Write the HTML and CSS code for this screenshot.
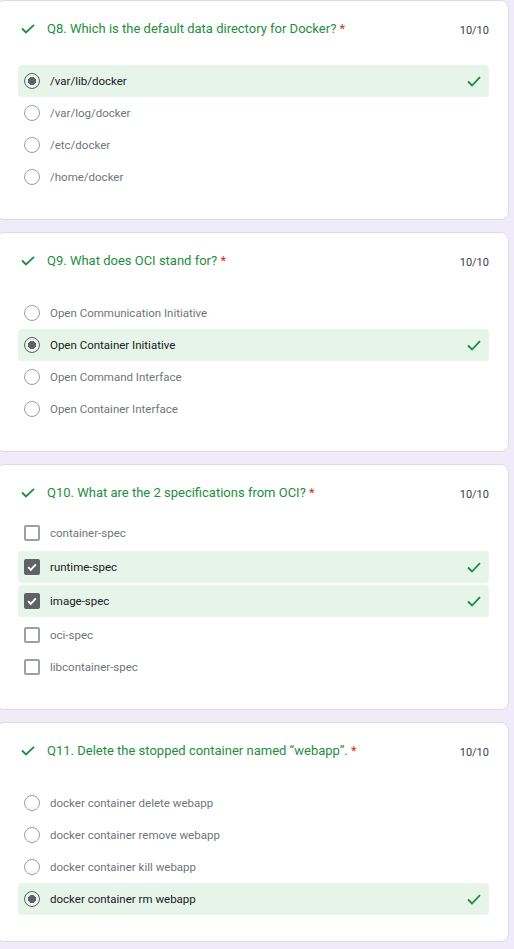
FILE: index.html
```html
<!DOCTYPE html>
<html>
<head>
<meta charset="utf-8">
<link rel="stylesheet" href="styles.css">
</head>
<body>
<div class="page">

  <div class="card">
    <div class="head">
      <svg class="qcheck" viewBox="0 0 14 10"><polyline points="1,4.5 5,8.5 13,0.8"/></svg>
      <div class="title">Q8. Which is the default data directory for Docker? <span class="req">*</span></div>
      <div class="score">10/10</div>
    </div>
    <div class="list">
      <div class="row correct"><span class="radio on"></span><span class="label sel">/var/lib/docker</span><svg class="rcheck" viewBox="0 0 14 11"><polyline points="1,5.5 5,9.5 13,1.2"/></svg></div>
      <div class="row"><span class="radio"></span><span class="label">/var/log/docker</span></div>
      <div class="row"><span class="radio"></span><span class="label">/etc/docker</span></div>
      <div class="row"><span class="radio"></span><span class="label">/home/docker</span></div>
    </div>
  </div>

  <div class="card">
    <div class="head">
      <svg class="qcheck" viewBox="0 0 14 10"><polyline points="1,4.5 5,8.5 13,0.8"/></svg>
      <div class="title">Q9. What does OCI stand for? <span class="req">*</span></div>
      <div class="score">10/10</div>
    </div>
    <div class="list">
      <div class="row"><span class="radio"></span><span class="label">Open Communication Initiative</span></div>
      <div class="row correct"><span class="radio on"></span><span class="label sel">Open Container Initiative</span><svg class="rcheck" viewBox="0 0 14 11"><polyline points="1,5.5 5,9.5 13,1.2"/></svg></div>
      <div class="row"><span class="radio"></span><span class="label">Open Command Interface</span></div>
      <div class="row"><span class="radio"></span><span class="label">Open Container Interface</span></div>
    </div>
  </div>

  <div class="card">
    <div class="head">
      <svg class="qcheck" viewBox="0 0 14 10"><polyline points="1,4.5 5,8.5 13,0.8"/></svg>
      <div class="title">Q10. What are the 2 specifications from OCI? <span class="req">*</span></div>
      <div class="score">10/10</div>
    </div>
    <div class="list checks">
      <div class="row"><span class="box"></span><span class="label">container-spec</span></div>
      <div class="row correct"><span class="box on"><svg viewBox="0 0 12 12"><polyline points="2.2,6.2 4.8,8.8 9.8,3.4"/></svg></span><span class="label sel">runtime-spec</span><svg class="rcheck" viewBox="0 0 14 11"><polyline points="1,5.5 5,9.5 13,1.2"/></svg></div>
      <div class="row correct"><span class="box on"><svg viewBox="0 0 12 12"><polyline points="2.2,6.2 4.8,8.8 9.8,3.4"/></svg></span><span class="label sel">image-spec</span><svg class="rcheck" viewBox="0 0 14 11"><polyline points="1,5.5 5,9.5 13,1.2"/></svg></div>
      <div class="row"><span class="box"></span><span class="label">oci-spec</span></div>
      <div class="row"><span class="box"></span><span class="label">libcontainer-spec</span></div>
    </div>
  </div>

  <div class="card">
    <div class="head">
      <svg class="qcheck" viewBox="0 0 14 10"><polyline points="1,4.5 5,8.5 13,0.8"/></svg>
      <div class="title">Q11. Delete the stopped container named “webapp”. <span class="req">*</span></div>
      <div class="score">10/10</div>
    </div>
    <div class="list">
      <div class="row"><span class="radio"></span><span class="label">docker container delete webapp</span></div>
      <div class="row"><span class="radio"></span><span class="label">docker container remove webapp</span></div>
      <div class="row"><span class="radio"></span><span class="label">docker container kill webapp</span></div>
      <div class="row correct"><span class="radio on"></span><span class="label sel">docker container rm webapp</span><svg class="rcheck" viewBox="0 0 14 11"><polyline points="1,5.5 5,9.5 13,1.2"/></svg></div>
    </div>
  </div>

</div>
</body>
</html>
```

FILE: styles.css
```css
html, body {
  margin: 0;
  padding: 0;
  background: #f0ebf8;
}

body {
  font-family: Roboto, "Liberation Sans", Arial, sans-serif;
}

.page {
  width: 513px;
  margin-left: -4px;
}

.card {
  background: #fff;
  border: 1px solid #dadce0;
  border-radius: 8px;
  padding: 15px 19px 26px 21px;
  margin-bottom: 12px;
}

.head {
  display: flex;
  align-items: center;
  height: 24px;
  margin-bottom: 25px;
}

.qcheck {
  width: 14px;
  height: 10px;
  margin-left: 3px;
  margin-right: 12px;
  margin-top: 1px;
  flex: none;
}

.qcheck polyline,
.rcheck polyline {
  fill: none;
  stroke: #1e8e3e;
  stroke-width: 1.8;
}

.title {
  flex: 1;
  font-size: 13px;
  color: #1e8e3e;
  margin-top: 1px;
}

.req {
  color: #d93025;
}

.score {
  font-size: 11px;
  color: #3c4043;
  margin-top: 4px;
}

.checks {
  margin-top: -12px;
}

.row {
  display: flex;
  align-items: center;
  height: 32px;
  padding: 0 8px 0 6px;
  border-radius: 4px;
}

.correct {
  background: #e6f4ea;
}

.checks .correct {
  margin: 2px 0;
}

.radio {
  width: 16px;
  height: 16px;
  box-sizing: border-box;
  border: 1.5px solid #9aa0a6;
  border-radius: 50%;
  flex: none;
}

.radio.on {
  border-color: #5f6368;
  background: radial-gradient(circle at center, #5f6368 0, #5f6368 3.8px, transparent 4.3px);
}

.box {
  width: 16px;
  height: 16px;
  box-sizing: border-box;
  border: 2px solid #9aa0a6;
  border-radius: 2px;
  flex: none;
  display: flex;
  align-items: center;
  justify-content: center;
}

.box.on {
  background: #5f6368;
  border-color: #5f6368;
}

.box svg {
  width: 12px;
  height: 12px;
}

.box svg polyline {
  fill: none;
  stroke: #fff;
  stroke-width: 1.9;
}

.label {
  margin-left: 10px;
  font-size: 11.5px;
  color: #70757a;
  flex: 1;
}

.label.sel {
  color: #202124;
}

.rcheck {
  width: 14px;
  height: 11px;
  flex: none;
}
```
